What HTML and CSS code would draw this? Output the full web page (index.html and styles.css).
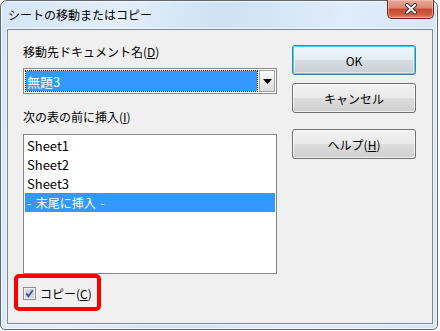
FILE: index.html
```html
<!DOCTYPE html>
<html lang="ja">
<head>
<meta charset="utf-8">
<title>シートの移動またはコピー</title>
<link rel="stylesheet" href="styles.css">
</head>
<body>
<div class="window">
  <div class="titlebar">
    <span class="title">シートの移動またはコピー</span>
    <div class="close">
      <svg width="16" height="12" viewBox="0 0 16 12">
        <path d="M4 2 L12 9.5 M12 2 L4 9.5" stroke="#3a3a3a" stroke-width="4" stroke-linecap="round"/>
        <path d="M4 2 L12 9.5 M12 2 L4 9.5" stroke="#ffffff" stroke-width="2" stroke-linecap="round"/>
      </svg>
    </div>
  </div>
  <div class="client">
    <div class="left">
      <div class="label l1">移動先ドキュメント名(<u>D</u>)</div>
      <div class="combo">
        <div class="combo-sel"><span>無題3</span></div>
        <div class="combo-btn">
          <svg width="9" height="5" viewBox="0 0 9 5"><path d="M0 0 H9 L4.5 5 Z" fill="#000"/></svg>
        </div>
      </div>
      <div class="label l2">次の表の前に挿入(<u>I</u>)</div>
      <div class="listbox">
        <div class="item">Sheet1</div>
        <div class="item">Sheet2</div>
        <div class="item">Sheet3</div>
        <div class="item selected">- 末尾に挿入 -</div>
      </div>
      <div class="highlight">
        <span class="checkbox">
          <svg width="13" height="13" viewBox="0 0 13 13">
            <rect x="0.5" y="0.5" width="12" height="12" fill="#dcdcdc" stroke="#8e8f8f"/>
            <rect x="1.5" y="1.5" width="10" height="10" fill="#d2d6de" stroke="#f4f4f4"/>
            <path d="M3.2 6.4 L5.4 9.2 L9.8 3.2" fill="none" stroke="#3d5591" stroke-width="1.8"/>
          </svg>
        </span>
        <span class="cb-label">コピー(<u>C</u>)</span>
      </div>
    </div>
    <div class="right">
      <div class="btn default">OK</div>
      <div class="btn">キャンセル</div>
      <div class="btn help">ヘルプ(<u>H</u>)</div>
    </div>
  </div>
</div>
</body>
</html>
```

FILE: styles.css
```css
html, body {
  margin: 0;
  padding: 0;
  background: #ffffff;
}
body {
  font-family: "Noto Sans CJK JP", "Noto Sans", sans-serif;
  font-size: 12px;
  color: #000;
}
.window {
  width: 438px;
  height: 330px;
  box-sizing: border-box;
  border: 1px solid #5d6876;
  border-radius: 7px 7px 5px 5px;
  background: linear-gradient(100deg, #d6e6f7 0%, #e2eefa 25%, #cfe1f4 45%, #dfecf9 70%, #d4e5f6 100%);
  box-shadow: inset 0 0 0 1px rgba(255,255,255,0.75);
  padding: 0 4px 5px 6px;
  display: flex;
  flex-direction: column;
}
.titlebar {
  height: 28px;
  display: flex;
  justify-content: space-between;
  align-items: flex-start;
  flex: none;
}
.title {
  align-self: center;
  padding-left: 1px;
  line-height: 16px;
  font-size: 12px;
  color: #000;
}
.close {
  width: 47px;
  height: 19px;
  margin-top: -1px;
  margin-right: -1px;
  box-sizing: border-box;
  border: 1px solid #6b2b22;
  border-top: none;
  border-radius: 0 0 5px 5px;
  background: linear-gradient(180deg, #e9a99a 0%, #dd8672 45%, #c44a32 50%, #cf5b40 80%, #e48c6d 100%);
  box-shadow: inset 0 0 0 1px rgba(255,210,200,0.5);
  display: flex;
  align-items: center;
  justify-content: center;
}
.client {
  height: 295px;
  box-sizing: border-box;
  border: 1px solid #7d8894;
  background: #f0f0f0;
  box-shadow: 0 0 0 1px rgba(255,255,255,0.6);
  display: flex;
  padding-left: 15px;
  gap: 15px;
}
.left {
  width: 254px;
  display: flex;
  flex-direction: column;
}
.label {
  line-height: 16px;
  white-space: nowrap;
}
.l1 { margin-top: 14px; }
.l2 { margin-top: 15px; }
u {
  text-decoration-thickness: 1px;
  text-underline-offset: 1px;
}
.combo {
  margin-top: 8px;
  height: 26px;
  box-sizing: border-box;
  border: 1px solid #8a8a8a;
  background: #fff;
  padding: 1px;
  display: flex;
  gap: 1px;
}
.combo-sel {
  flex: 1;
  background: #3399ff;
  outline: 1px dotted #000;
  outline-offset: -1px;
  border: 1px solid #fff;
  color: #fff;
  display: flex;
  align-items: center;
  padding-left: 1px;
}
.combo-sel span {
  font-size: 13px;
}
.combo-btn {
  width: 16px;
  box-sizing: border-box;
  border: 1px solid #a0a0a0;
  background: linear-gradient(180deg, #fbfbfb 0%, #ececec 50%, #dcdcdc 100%);
  display: flex;
  align-items: center;
  justify-content: center;
}
.listbox {
  margin-top: 9px;
  height: 140px;
  box-sizing: border-box;
  border: 1px solid #828790;
  background: #fff;
  padding: 1px;
}
.item {
  height: 19px;
  line-height: 19px;
  padding-left: 2px;
  font-size: 13px;
}
.item.selected {
  background: #3399ff;
  color: #fff;
  font-size: 12px;
  word-spacing: 2px;
}
.highlight {
  margin-left: -9px;
  width: 87px;
  height: 37px;
  box-sizing: border-box;
  border: 4px solid #ff0000;
  border-radius: 5px;
  display: flex;
  align-items: center;
  padding: 2px 0 0 5px;
  gap: 4px;
}
.checkbox {
  width: 13px;
  height: 13px;
  display: flex;
}
.cb-label {
  line-height: 16px;
}
.right {
  width: 124px;
  display: flex;
  flex-direction: column;
  padding-top: 15px;
  gap: 8px;
}
.btn {
  height: 30px;
  box-sizing: border-box;
  border: 1px solid #707070;
  border-radius: 3px;
  background: linear-gradient(180deg, #f2f2f2 0%, #ebebeb 49%, #dddddd 50%, #cfcfcf 100%);
  box-shadow: inset 0 0 0 1px rgba(255,255,255,0.75);
  display: flex;
  align-items: center;
  justify-content: center;
}
.btn.default {
  border-color: #3c7fb1;
  box-shadow: inset 0 0 0 1px #48d3fb, inset 0 0 0 2px rgba(255,255,255,0.5);
  background: linear-gradient(180deg, #eaf6fd 0%, #e4eef5 49%, #d6dde2 50%, #c9d0d5 100%);
}
.btn.help {
  margin-top: 8px;
}
```
